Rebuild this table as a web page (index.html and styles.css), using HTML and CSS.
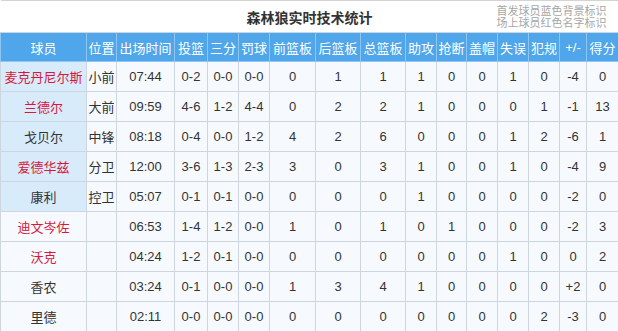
FILE: index.html
```html
<!DOCTYPE html>
<html lang="zh-CN">
<head>
  <meta charset="UTF-8">
  <title>森林狼实时技术统计</title>
  <link rel="stylesheet" href="styles.css">
</head>
<body>

  <table class="stats">
    <colgroup>
      <col style="width:86px"><col style="width:30px"><col style="width:58px"><col style="width:33px">
      <col style="width:31px"><col style="width:31px"><col style="width:46px"><col style="width:45px">
      <col style="width:45px"><col style="width:31px"><col style="width:30px"><col style="width:31px">
      <col style="width:31px"><col style="width:31px"><col style="width:27px"><col style="width:32px">
    </colgroup>
    <tr class="title-row">
      <td colspan="16">
        <div class="title-box">
          <span class="title">森林狼实时技术统计</span>
          <span class="note">首发球员蓝色背景标识<br>场上球员红色名字标识</span>
        </div>
      </td>
    </tr>
    <tr class="head">
      <th>球员</th><th>位置</th><th>出场时间</th><th>投篮</th><th>三分</th><th>罚球</th><th>前篮板</th><th>后篮板</th>
      <th>总篮板</th><th>助攻</th><th>抢断</th><th>盖帽</th><th>失误</th><th>犯规</th><th>+/-</th><th>得分</th>
    </tr>
    <tr>
      <td class="name starter on">麦克丹尼尔斯</td><td>小前</td><td>07:44</td><td>0-2</td><td>0-0</td><td>0-0</td><td>0</td><td>1</td>
      <td>1</td><td>1</td><td>0</td><td>0</td><td>1</td><td>0</td><td>-4</td><td>0</td>
    </tr>
    <tr>
      <td class="name starter on">兰德尔</td><td>大前</td><td>09:59</td><td>4-6</td><td>1-2</td><td>4-4</td><td>0</td><td>2</td>
      <td>2</td><td>1</td><td>0</td><td>0</td><td>0</td><td>1</td><td>-1</td><td>13</td>
    </tr>
    <tr>
      <td class="name starter">戈贝尔</td><td>中锋</td><td>08:18</td><td>0-4</td><td>0-0</td><td>1-2</td><td>4</td><td>2</td>
      <td>6</td><td>0</td><td>0</td><td>0</td><td>1</td><td>2</td><td>-6</td><td>1</td>
    </tr>
    <tr>
      <td class="name starter on">爱德华兹</td><td>分卫</td><td>12:00</td><td>3-6</td><td>1-3</td><td>2-3</td><td>3</td><td>0</td>
      <td>3</td><td>1</td><td>0</td><td>0</td><td>1</td><td>0</td><td>-4</td><td>9</td>
    </tr>
    <tr>
      <td class="name starter">康利</td><td>控卫</td><td>05:07</td><td>0-1</td><td>0-1</td><td>0-0</td><td>0</td><td>0</td>
      <td>0</td><td>1</td><td>0</td><td>0</td><td>0</td><td>0</td><td>-2</td><td>0</td>
    </tr>
    <tr>
      <td class="name on">迪文岑佐</td><td></td><td>06:53</td><td>1-4</td><td>1-2</td><td>0-0</td><td>1</td><td>0</td>
      <td>1</td><td>0</td><td>1</td><td>0</td><td>0</td><td>0</td><td>-2</td><td>3</td>
    </tr>
    <tr>
      <td class="name on">沃克</td><td></td><td>04:24</td><td>1-2</td><td>0-1</td><td>0-0</td><td>0</td><td>0</td>
      <td>0</td><td>0</td><td>0</td><td>0</td><td>1</td><td>0</td><td>0</td><td>2</td>
    </tr>
    <tr>
      <td class="name">香农</td><td></td><td>03:24</td><td>0-1</td><td>0-0</td><td>0-0</td><td>1</td><td>3</td>
      <td>4</td><td>1</td><td>0</td><td>0</td><td>0</td><td>0</td><td>+2</td><td>0</td>
    </tr>
    <tr>
      <td class="name">里德</td><td></td><td>02:11</td><td>0-0</td><td>0-0</td><td>0-0</td><td>0</td><td>0</td>
      <td>0</td><td>0</td><td>0</td><td>0</td><td>0</td><td>2</td><td>-3</td><td>0</td>
    </tr>
  </table>

</body>
</html>
```

FILE: styles.css
```css
body {
  margin: 0;
  padding: 0;
  background-color: #ffffff;
  font-family: "Liberation Sans", "Noto Sans CJK SC", sans-serif;
  font-size: 13px;
  color: #333333;
}

.stats {
  width: 618px;
  table-layout: fixed;
  border-collapse: collapse;
}

.stats td, .stats th {
  height: 29px;
  padding: 0;
  text-align: center;
  white-space: nowrap;
  overflow: hidden;
  border: 1px solid #cdd5de;
  background-color: #f6fafe;
}

.title-row td {
  height: 31px;
  background-color: #ffffff;
  border-left: none;
  border-right: none;
  border-top: 1px solid #d4d4d4;
}

.title-box {
  display: flex;
  align-items: center;
  justify-content: flex-end;
  position: relative;
  height: 31px;
  padding-right: 12px;
}

.title {
  position: absolute;
  left: 0;
  right: 0;
  text-align: center;
  font-size: 14px;
  font-weight: bold;
  color: #333333;
}

.note {
  position: relative;
  text-align: left;
  font-size: 11px;
  line-height: 12px;
  color: #a6a6a6;
}

.head th {
  height: 28px;
  background-color: #4fa6ea;
  color: #ffffff;
  font-weight: normal;
  border-color: #8fc6f1;
  border-top-color: #4fa6ea;
}

.stats .starter {
  background-color: #d8ebfb;
}

.name.on {
  color: #d9173a;
}
```
